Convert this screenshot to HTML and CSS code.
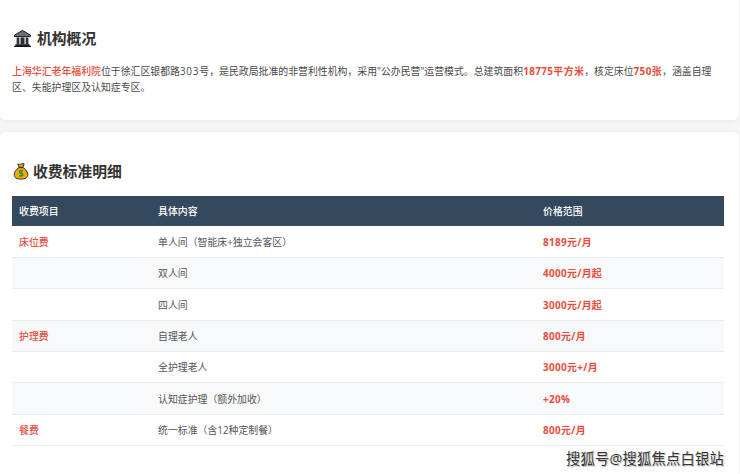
FILE: index.html
```html
<!DOCTYPE html>
<html lang="zh">
<head>
<meta charset="utf-8">
<title>机构概况</title>
<link rel="stylesheet" href="styles.css">
</head>
<body>
<section class="card card-top">
  <h2 class="heading">
    <svg class="icon" viewBox="0 0 20 20" width="19" height="19"><path d="M10 1.500 18.500 6.500V8H1.500V6.500Z" fill="#6a6f74" stroke="#111" stroke-width="1"/><path d="M3 8.500H17V16H3Z" fill="#d4d8db"/><path d="M4 9h2.500v7H4ZM8 9h4v7H8ZM13.500 9H16v7h-2.500Z" fill="#2b2f33"/><path d="M2.500 16h15v1.500h-15ZM1 17.500h18V19H1Z" fill="#17191b"/></svg>
    <span>机构概况</span>
  </h2>
  <p class="intro"><strong class="lead">上海华汇老年福利院</strong>位于徐汇区银都路<span class="num">303</span>号，是民政局批准的非营利性机构，采用"公办民营"运营模式。总建筑面积<strong class="figure">18775平方米</strong>，核定床位<strong class="figure">750张</strong>，涵盖自理区、失能护理区及认知症专区。</p>
</section>
<section class="card card-fees">
  <h2 class="heading heading-fees">
    <svg class="icon icon-bag" viewBox="0 0 20 22" width="16" height="19"><path d="M6 1.500c1.500 1 2.500.8 4 .2s3-.6 4-.2l-1.800 4.500H7.800Z" fill="#f5a800" stroke="#2a2a2a" stroke-width="1.200" stroke-linejoin="round"/><path d="M7.500 6C3.500 8.500 1.500 12 1.500 15c0 3.500 3 5.500 8.500 5.500s8.500-2 8.500-5.500c0-3-2-6.500-6-9Z" fill="#f5a800" stroke="#2a2a2a" stroke-width="1.200"/><path d="M7.500 6h5" stroke="#2a2a2a" stroke-width="1.500"/><path d="M12.500 10.500c-.8-.9-4.500-1.200-4.500 1 0 2.300 4.500 1.300 4.500 3.500 0 2.200-3.700 1.900-4.800.8M10.200 8.500v9.500" fill="none" stroke="#1c9a3a" stroke-width="1.500"/></svg>
    <span>收费标准明细</span>
  </h2>
  <table class="fees">
    <thead>
      <tr><th class="col-a">收费项目</th><th class="col-b">具体内容</th><th>价格范围</th></tr>
    </thead>
    <tbody>
      <tr><td class="cat">床位费</td><td>单人间（智能床+独立会客区）</td><td class="price">8189元/月</td></tr>
      <tr><td></td><td>双人间</td><td class="price">4000元/月起</td></tr>
      <tr class="tall"><td></td><td>四人间</td><td class="price">3000元/月起</td></tr>
      <tr><td class="cat">护理费</td><td>自理老人</td><td class="price">800元/月</td></tr>
      <tr><td></td><td>全护理老人</td><td class="price">3000元+/月</td></tr>
      <tr class="tall"><td></td><td>认知症护理（额外加收）</td><td class="price">+20%</td></tr>
      <tr><td class="cat">餐费</td><td>统一标准（含12种定制餐）</td><td class="price">800元/月</td></tr>
    </tbody>
  </table>
</section>
<div class="watermark">搜狐号@搜狐焦点白银站</div>
</body>
</html>
```
FILE: styles.css
```css
* { box-sizing: border-box; }
html, body { height: 100%; }
body {
  margin: 0;
  width: 740px;
  height: 474px;
  overflow: hidden;
  position: relative;
  background: #f6f6f6;
  color: #333;
  font-family: "Open Sans", "Noto Sans CJK SC", sans-serif;
  font-size: 9.9px;
}
.card {
  width: 739px;
  background: #fff;
  padding: 0 15px 0 12px;
}
.card-top {
  height: 120px;
  padding-top: 27px;
  border-radius: 0 0 6px 6px;
  box-shadow: 0 1px 6px rgba(0, 0, 0, 0.06);
}
.card-fees {
  margin-top: 12px;
  height: 342px;
  padding-top: 28px;
  border-radius: 6px 6px 0 0;
  box-shadow: 0 1px 6px rgba(0, 0, 0, 0.06);
}
.heading {
  margin: 0;
  display: flex;
  align-items: center;
  gap: 5px;
  height: 22px;
  font-size: 14.800px;
  font-weight: 700;
  color: #333;
  line-height: 22px;
}
.heading-fees { gap: 4px; }
.icon { flex: none; margin-left: 1px; }
.intro {
  margin: 14px 0 0;
  line-height: 16px;
  color: #4a4a4a;
  width: 702px;
}
.num { letter-spacing: 0.8px; }
.lead { color: #e74c3c; font-weight: 500; }
.figure { color: #e74c3c; font-weight: 700; letter-spacing: 0.4px; }
.fees {
  margin-top: 14px;
  width: 712px;
  border-collapse: collapse;
  table-layout: fixed;
}
.col-a { width: 139px; }
.col-b { width: 385px; }
.fees th {
  height: 30px;
  background: #34495e;
  color: #fff;
  font-weight: 500;
  text-align: left;
  padding: 0 7px;
}
.fees td {
  height: 31px;
  padding: 1px 7px 0;
  border-bottom: 1px solid #e9ebee;
  color: #555;
}
.fees tr.tall td { height: 32px; }
.fees tbody tr:nth-child(even) td { background: #f8f9fa; }
.fees td.cat { color: #e74c3c; font-weight: 500; }
.fees td.price { color: #e74c3c; font-weight: 700; letter-spacing: 0.35px; }
.watermark {
  position: absolute;
  right: 16px;
  bottom: 7px;
  font-size: 14.300px;
  line-height: 17px;
  color: #333;
  letter-spacing: 0.2px;
  text-shadow: 0 0 1px #fff, 1px 1px 1px #aaa;
}
```
